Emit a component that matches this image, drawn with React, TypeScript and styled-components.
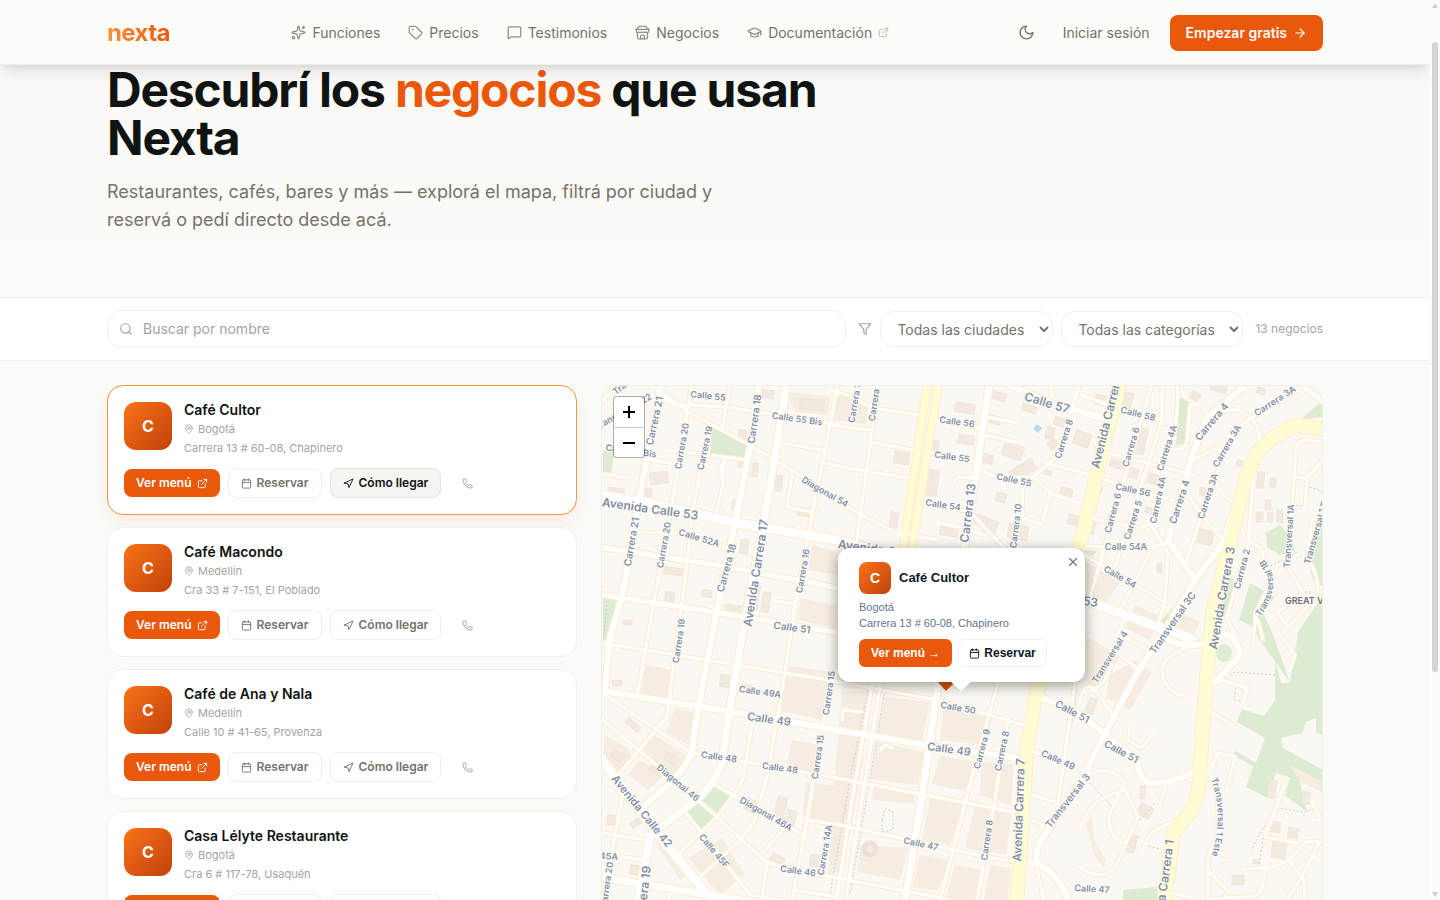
import React from "react";
import styled, { createGlobalStyle, css } from "styled-components";
import {
  ArrowRight,
  Calendar,
  ExternalLink,
  GraduationCap,
  MapPin,
  MessageSquare,
  Navigation,
  Phone,
  Search,
  Sparkles,
  Tag,
  X,
} from "lucide-react";

const color = {
  ink: "#0f1412",
  muted: "#78716c",
  faint: "#a8a29e",
  line: "#f0efeb",
  page: "#fafaf7",
  brand: "#ea580c",
  brandDark: "#c2410c",
  slate: "#64748b",
};

const GlobalStyle = createGlobalStyle`
  *, *::before, *::after { box-sizing: border-box; }
  body {
    margin: 0;
    background: ${color.page};
    color: ${color.ink};
    font-family: Inter, "Liberation Sans", sans-serif;
    font-size: 14px;
    line-height: 20px;
  }
  h1, h2, p { margin: 0; }
  a { color: inherit; text-decoration: none; }
  button, input, select { font: inherit; color: inherit; }
`;

const Shell = styled.div`
  display: grid;
  grid-template-columns: minmax(0, 1fr) 10px;
  height: 100vh;
  overflow: hidden;
`;

const Page = styled.div`
  height: 100vh;
  overflow: hidden;
`;

const Container = styled.div`
  width: 100%;
  max-width: 1280px;
  margin: 0 auto;
  padding: 0 32px;
`;

/* Header */

const Header = styled.header`
  position: relative;
  z-index: 5;
  background: #fbfbf8;
  box-shadow: inset 0 -1px ${color.line}, 0 10px 15px -3px rgba(0, 0, 0, 0.1), 0 4px 6px -4px rgba(0, 0, 0, 0.1);
`;

const HeaderBar = styled(Container)`
  display: flex;
  align-items: center;
  justify-content: space-between;
  height: 65px;
`;

const Logo = styled.a`
  font-size: 24px;
  line-height: 32px;
  font-weight: 700;
  letter-spacing: -0.025em;
  background: linear-gradient(90deg, #fb923c, ${color.brand});
  -webkit-background-clip: text;
  background-clip: text;
  color: transparent;
`;

const Nav = styled.nav`
  display: flex;
  gap: 28px;
`;

const NavLink = styled.a`
  display: flex;
  align-items: center;
  gap: 6px;
  line-height: 21px;
  color: ${color.muted};
  svg { opacity: 0.8; }
  svg + span + svg { opacity: 0.5; }
`;

const HeaderActions = styled.div`
  display: flex;
  align-items: center;
  gap: 20px;
  line-height: 21px;
  color: ${color.muted};
`;

const IconButton = styled.button`
  display: grid;
  place-items: center;
  width: 32px;
  height: 32px;
  padding: 0;
  border: 0;
  border-radius: 8px;
  background: none;
`;

const SignUp = styled.a`
  display: flex;
  align-items: center;
  gap: 6px;
  height: 36px;
  padding: 0 16px;
  border-radius: 8px;
  background: ${color.brand};
  color: #fff;
  font-weight: 600;
`;

/* Hero */

const Hero = styled.section`
  padding: 1px 0 63px;
  background: linear-gradient(180deg, #faf9f5, ${color.page});
`;

const HeroTitle = styled.h1`
  max-width: 768px;
  font-size: 48px;
  line-height: 48px;
  font-weight: 700;
  letter-spacing: -0.025em;
  em { font-style: normal; color: ${color.brand}; }
`;

const HeroText = styled.p`
  max-width: 640px;
  margin-top: 16px;
  font-size: 18px;
  line-height: 28px;
  color: ${color.muted};
`;

/* Filters */

const FilterBar = styled.section`
  background: #fff;
  border: solid ${color.line};
  border-width: 1px 0;
`;

const FilterForm = styled.form`
  display: flex;
  align-items: center;
  gap: 8px;
  padding: 12px 0;
`;

const SearchField = styled.label`
  display: flex;
  flex: 1;
  align-items: center;
  gap: 10px;
  height: 38px;
  margin-right: 4px;
  padding: 0 11px;
  border: 1px solid ${color.line};
  border-radius: 14px;
  color: ${color.faint};
  input {
    flex: 1;
    min-width: 0;
    padding: 0;
    border: 0;
    outline: 0;
    background: none;
    color: ${color.ink};
  }
  input::placeholder { color: ${color.faint}; opacity: 1; }
`;

const FilterIcon = styled.span`
  display: flex;
  color: ${color.faint};
`;

const Select = styled.select<{ $width: number }>`
  width: ${(p) => p.$width}px;
  height: 36px;
  padding: 0 0 0 12px;
  border: 1px solid ${color.line};
  border-radius: 14px;
  background: #fff;
  color: ${color.muted};
`;

const Count = styled.span`
  margin-left: 4px;
  font-size: 12px;
  color: ${color.faint};
`;

/* Results */

const Results = styled(Container)`
  display: grid;
  grid-template-columns: 470fr 722fr;
  align-items: start;
  gap: 24px;
  padding-top: 24px;
`;

const List = styled.div`
  display: flex;
  flex-direction: column;
  gap: 12px;
`;

const Card = styled.article<{ $active?: boolean }>`
  display: flex;
  flex-direction: column;
  gap: 12px;
  padding: 16px;
  border: 1px solid ${(p) => (p.$active ? "#fb923c" : color.line)};
  border-radius: 16px;
  background: #fff;
  ${(p) =>
    p.$active &&
    css`
      box-shadow: 0 8px 16px -4px rgba(234, 88, 12, 0.12);
    `}
`;

const CardTop = styled.div`
  display: flex;
  gap: 12px;
`;

const Avatar = styled.div<{ $small?: boolean }>`
  display: grid;
  place-items: center;
  flex: none;
  width: ${(p) => (p.$small ? 32 : 48)}px;
  height: ${(p) => (p.$small ? 32 : 48)}px;
  border-radius: ${(p) => (p.$small ? 8 : 12)}px;
  background: linear-gradient(135deg, #f97316, ${color.brandDark});
  color: #fff;
  font-size: ${(p) => (p.$small ? 14 : 16)}px;
  font-weight: 700;
`;

const CardInfo = styled.div`
  display: flex;
  flex-direction: column;
  gap: 3px;
  font-size: 11px;
  line-height: 16px;
  color: ${color.faint};
`;

const CardName = styled.h2`
  font-size: 14px;
  line-height: 16px;
  font-weight: 600;
  color: ${color.ink};
`;

const City = styled.p`
  display: flex;
  align-items: center;
  gap: 4px;
`;

const Actions = styled.div`
  display: flex;
  align-items: center;
  gap: 8px;
`;

const Action = styled.a<{ $kind?: "primary" | "active" | "icon" }>`
  display: flex;
  align-items: center;
  gap: 5px;
  height: 30px;
  padding: 0 12px;
  border: 1px solid ${color.line};
  border-radius: 8px;
  color: ${color.muted};
  font-size: 12px;
  font-weight: 600;
  white-space: nowrap;
  ${(p) =>
    p.$kind === "primary" &&
    css`
      height: 28px;
      border: 0;
      background: ${color.brand};
      color: #fff;
    `}
  ${(p) =>
    p.$kind === "active" &&
    css`
      border-color: #e7e5e0;
      background: #f4f4f0;
      color: ${color.ink};
    `}
  ${(p) =>
    p.$kind === "icon" &&
    css`
      border-color: transparent;
      color: ${color.faint};
    `}
`;

/* Map */

const MapPanel = styled.section`
  position: relative;
  height: 640px;
  overflow: hidden;
  border: 1px solid ${color.line};
  border-radius: 16px;
  background: #fbf7f2;
`;

const MapCanvas = styled.svg`
  display: block;
  width: 100%;
  height: 100%;
  font-family: Inter, "Liberation Sans", sans-serif;
`;

const ZoomControl = styled.div`
  position: absolute;
  top: 10px;
  left: 11px;
  display: flex;
  flex-direction: column;
  border: 1px solid rgba(0, 0, 0, 0.3);
  border-radius: 4px;
  background: #fff;
  background-clip: padding-box;
`;

const ZoomButton = styled.button`
  display: grid;
  place-items: center;
  width: 30px;
  height: 30px;
  padding: 0;
  border: 0;
  background: none;
  color: #000;
  & + & { border-top: 1px solid #ccc; }
`;

const Popup = styled.div`
  position: absolute;
  top: 162px;
  left: 236px;
  width: 247px;
  padding: 14px 21px 15px;
  border-radius: 12px;
  background: #fff;
  box-shadow: 0 3px 14px rgba(0, 0, 0, 0.4);
  color: ${color.slate};
  font-family: "Liberation Sans", Arial, sans-serif;
  font-size: 11px;
  line-height: 16px;
`;

const PopupHead = styled.div`
  display: flex;
  align-items: center;
  gap: 8px;
  margin-bottom: 5px;
  color: #0f172a;
  font-size: 13px;
  font-weight: 700;
`;

const PopupActions = styled.div`
  display: flex;
  gap: 6px;
  margin-top: 8px;
`;

const PopupAction = styled.a<{ $primary?: boolean }>`
  display: flex;
  align-items: center;
  gap: 4px;
  height: 28px;
  padding: 0 ${(p) => (p.$primary ? 12 : 10)}px;
  border: ${(p) => (p.$primary ? "0" : "1px solid #eef0f6")};
  border-radius: 6px;
  background: ${(p) => (p.$primary ? color.brand : "#fff")};
  color: ${(p) => (p.$primary ? "#fff" : "#0f172a")};
  font-size: 12px;
  font-weight: 700;
  white-space: nowrap;
`;

const PopupClose = styled.button`
  position: absolute;
  top: 4px;
  right: 2px;
  display: grid;
  place-items: center;
  width: 20px;
  height: 20px;
  padding: 0;
  border: 0;
  background: none;
  color: #757575;
`;

const PopupTail = styled.svg`
  position: absolute;
  top: 100%;
  left: 97px;
`;

/* Scroll rail */

const Rail = styled.div`
  display: flex;
  flex-direction: column;
  align-items: center;
  padding: 3px 0;
  background: #fcfcfb;
`;

const Thumb = styled.div`
  flex: none;
  width: 6px;
  height: 70vh;
  margin: 34px 0 auto;
  border-radius: 3px;
  background: #d4d4d2;
`;

const StoreIcon = () => (
  <svg width="15" height="15" viewBox="0 0 24 24" fill="none" stroke="currentColor" strokeWidth="2" strokeLinecap="round" strokeLinejoin="round" aria-hidden="true">
    <path d="m2 7 4.41-4.41A2 2 0 0 1 7.83 2h8.34a2 2 0 0 1 1.42.59L22 7" />
    <path d="M4 12v8a2 2 0 0 0 2 2h12a2 2 0 0 0 2-2v-8" />
    <path d="M15 22v-4a2 2 0 0 0-2-2h-2a2 2 0 0 0-2 2v4M2 7h20" />
    <path d="M22 7v3a2 2 0 0 1-2 2a2.7 2.7 0 0 1-1.59-.63.7.7 0 0 0-.82 0A2.7 2.7 0 0 1 16 12a2.7 2.7 0 0 1-1.59-.63.7.7 0 0 0-.82 0A2.7 2.7 0 0 1 12 12a2.7 2.7 0 0 1-1.59-.63.7.7 0 0 0-.82 0A2.7 2.7 0 0 1 8 12a2.7 2.7 0 0 1-1.59-.63.7.7 0 0 0-.82 0A2.7 2.7 0 0 1 4 12a2 2 0 0 1-2-2V7" />
  </svg>
);

const MoonIcon = () => (
  <svg width="17" height="17" viewBox="0 0 24 24" fill="none" stroke="currentColor" strokeWidth="2" strokeLinecap="round" strokeLinejoin="round" aria-hidden="true">
    <path d="M12 3a6 6 0 0 0 9 9 9 9 0 1 1-9-9Z" />
  </svg>
);

const FunnelIcon = () => (
  <svg width="14" height="14" viewBox="0 0 24 24" fill="none" stroke="currentColor" strokeWidth="2" strokeLinecap="round" strokeLinejoin="round" aria-hidden="true">
    <polygon points="22 3 2 3 10 12.46 10 19 14 21 14 12.46 22 3" />
  </svg>
);

/* Street data, in map units */

const avenues: [number, string][] = [
  [9, "M598 495L640 501L737 523L837 540L960 572L1085 600L1147 623L1190 638"],
  [6, "M662 380L639 500L622 597L610 637L605 690"],
  [6, "M759 380L750 447L735 523L715 620L698 710L692 752Q686 768 670 783L643 807"],
  [7, "M787 380L770 487L742 637L730 707L722 763Q716 780 700 797L657 830"],
  [5, "M598 547L717 565L838 588L960 610"],
  [5, "M598 594L713 612L840 633"],
  [6, "M598 690L670 702L733 712L837 730L949 749L1017 758"],
  [9, "M600 757L657 833L712 900L740 930"],
  [8, "M650 837L638 900L630 940"],
  [7, "M598 877L710 895L790 908"],
  [7, "M990 380L977 467L965 543L937 690L923 790L905 900L900 940"],
  [6, "M1005 383L1048 402L1102 418"],
  [6, "M1242 388L1207 418L1193 453L1168 540L1195 580L1223 543L1237 503"],
  [6, "M1195 580L1160 638L1137 673L1103 737L1080 783L1043 837Q1034 850 1037 863Q1062 876 1070 905"],
  [6, "M1043 698L1080 715L1102 732L1137 760Q1140 782 1150 783Q1170 784 1192 773L1205 773"],
  [5, "M1298 382L1326 404"],
  [6, "M1165 638Q1186 650 1208 642L1228 634Q1244 650 1238 658L1215 682"],
];

const yellow: [number, string][] = [
  [7, "M928 380L903 547L895 600"],
  [7, "M939 380L912 547L905 600"],
  [13, "M1121 380L1103 447L1082 537L1050 640L1035 700L1027 747L1017 900L1014 960"],
  [13, "M1328 430L1297 425Q1264 440 1256 455Q1246 475 1243 490L1213 613L1208 660L1200 767Q1200 800 1188 815L1173 833L1165 900L1160 960"],
];

const streets = [
  "M602 400L612 392L625 384M602 398L610 406",
  "M645 382L690 413L750 445L803 477L838 502L900 535",
  "M662 398L672 404L727 407M727 407L840 425",
  "M780 443L823 450M823 463L840 466",
  "M730 384L722 430M838 384L797 593L787 660L768 773L755 820L740 840L697 880",
  "M692 384L671 510L653 607L638 692M705 447L693 510L687 563L667 717L620 773",
  "M668 450L747 460M645 458L668 463M603 474L628 478M633 532L677 533L727 547",
  "M792 477L787 507L812 512M725 458L720 470L724 480L716 515M725 458L722 480",
  "M775 601L795 604L793 612",
  "M830 390L850 396L873 408L920 415M830 425L870 430M870 442L913 450M830 465L908 478",
  "M878 384L868 460L857 540M900 532L936 540",
  "M935 420L980 428M930 452L975 462M920 502L970 512L1003 547",
  "M978 470L1000 478L1033 477L1055 458L1080 384M987 417L1017 423M985 435L1015 442",
  "M1047 463L1090 475M1033 477L1050 493L1085 505M1050 493L1042 525L1023 518L1022 487",
  "M940 523L962 528L985 535M955 480L957 477L972 478",
  "M1105 452L1193 475M1080 472L1172 500M1090 518L1140 528L1152 523L1162 500",
  "M1080 546L1147 548L1168 543M1082 395L1102 403L1162 420M1152 384L1090 597M1162 384L1162 420L1143 480L1115 567",
  "M1177 384Q1179 400 1173 450Q1187 450 1187 440L1190 405Q1200 400 1208 416Q1232 406 1243 412Q1258 420 1260 440",
  "M1298 390L1253 417L1230 433L1215 480Q1220 495 1237 505M1213 480L1187 560",
  "M1187 493L1200 513L1220 537M1193 460L1217 448L1225 455",
  "M1080 553L1165 602L1168 553L1150 523M1153 547L1120 610M1125 618L1115 640M1165 600L1158 625",
  "M1255 460L1248 543L1227 617L1237 640M1248 543Q1258 543 1262 552Q1268 572 1274 580M1253 643L1256 612Q1266 590 1274 580",
  "M1323 442Q1297 436 1296 448L1288 567L1303 593L1277 612L1288 627L1318 595Q1318 570 1307 560L1312 520L1323 515",
  "M1293 477L1307 478L1305 507M1307 478L1323 460",
  "M1207 772Q1220 785 1218 833L1208 857L1208 900M1218 853L1228 856M1208 870L1230 893M1208 899L1255 896Q1266 890 1264 870L1290 860L1305 842L1323 842",
  "M1323 836L1300 880L1288 898M1290 862L1304 880L1305 900M1311 855L1320 861M1244 869L1264 868",
  "M1215 678L1247 688L1243 703M1207 710L1233 725M1212 767L1217 753L1235 757L1227 790",
  "M1190 647Q1150 660 1167 685Q1175 696 1187 697M1130 728L1128 740L1141 748L1153 735",
  "M1117 653L1137 668M1130 640L1148 650M1085 692Q1103 690 1112 665M1080 700Q1084 680 1095 690L1112 713",
  "M1080 780Q1110 760 1125 783L1110 813Q1106 835 1123 843M1125 790L1138 817L1115 868Q1100 882 1080 867M1123 790Q1086 800 1080 830M1143 850Q1150 823 1180 823M1165 787L1160 805",
  "M1172 893L1190 897M1287 778L1265 837L1297 843M1311 800L1321 820L1314 820",
  "M1263 640L1258 620M1278 632L1295 655L1290 670",
  "M603 643L840 682L937 700L1030 727M605 695L690 752L837 778L1013 812",
  "M603 720L713 813L767 863L837 878L937 897L960 903M712 783L803 835",
  "M753 720L745 767Q744 782 735 793L717 817L680 853M685 812L750 895L780 900M623 793L607 880L600 920",
  "M603 833L645 840M623 857L642 860M767 863L762 900M840 660L823 723L807 820L792 900M783 830L762 853M670 895L667 905",
  "M807 820L840 825L987 857L1037 865M795 890L838 897",
  "M998 683L975 765L940 900M1008 720L990 830L977 900M1030 750L1090 773M1075 683L1058 803M1027 793L1058 803M1027 818L1043 825M1037 870L1045 905",
  "M1080 383L1075 395M1050 384L1052 395M842 720L843 710L862 712M880 750L886 745L892 748",
  "M880 686L862 800L845 905M872 686L852 800L836 905",
];

const footpaths = [
  "M1275 675L1235 672L1228 678M1236 688L1234 700L1244 702M1292 505L1304 506M1267 568L1297 552M1310 487L1323 492M1305 592L1313 592",
  "M1090 783L1113 808M1145 845L1160 849M1277 808L1305 812L1316 808M1265 825L1251 850M1263 838L1259 868M1140 820L1155 803",
  "M885 690L868 790L850 895M868 690L848 790L830 895M1166 425L1190 443M643 460L636 500M607 605L603 640",
  "M882 820L885 808L893 812L893 830L882 832Z",
];

const parks = [
  "712,427 747,443 744,457 710,453",
  "603,450 614,453 611,473 603,472",
  "603,593 619,600 612,640 603,640",
  "713,783 732,795 717,813 701,799",
  "697,802 714,817 702,833 685,813",
  "1180,397 1189,402 1185,443 1173,447",
  "1323,400 1323,417 1300,420",
  "1280,525 1293,540 1295,552 1280,555 1267,547 1266,533",
  "1323,517 1323,587 1313,580 1308,560 1310,537",
  "1250,583 1275,597 1263,612 1260,640 1250,625 1239,620",
  "1230,577 1237,583 1228,612 1215,620",
  "1168,613 1173,622 1170,628 1160,622",
  "1082,550 1098,551 1092,556",
  "1123,890 1157,887 1158,900 1123,902",
  "1262,610 1275,640 1284,665 1290,683 1281,683 1275,660 1275,700 1264,716 1242,709 1237,722 1265,738 1256,763 1236,751 1233,755 1253,766 1246,787 1268,798 1276,773 1290,778 1285,795 1307,812 1300,782 1290,765 1323,782 1323,770 1283,748 1281,738 1302,733 1306,722 1316,718 1316,733 1323,735 1323,595 1298,632 1290,683 1260,640",
];

const blocks = [
  "842,692 872,690 858,790 843,870 828,875 836,760",
  "884,697 930,702 922,742 876,736",
  "876,742 925,752 918,785 870,779",
  "944,704 992,718 985,745 940,740",
  "940,755 975,762 970,792 932,784",
  "930,798 965,803 950,845 922,840",
  "975,806 1012,814 1006,855 965,848",
  "982,762 1014,764 1011,805 980,795",
  "875,785 915,792 913,804 871,800",
  "860,845 908,848 900,880 858,872",
  "920,855 950,860 938,890 912,888",
  "955,865 985,870 975,900 945,900",
  "990,865 1010,868 1008,900 984,900",
  "784,665 832,672 824,720 775,710",
  "792,740 820,745 812,775 786,770",
  "806,782 836,786 832,822 802,816",
  "646,665 675,670 668,700 640,692",
  "675,708 694,712 688,745 666,732",
  "605,735 628,748 634,760 618,775 603,760",
  "655,735 690,758 672,778 640,755",
  "640,760 664,775 648,790 628,775",
  "688,858 722,838 745,875 720,895",
  "655,842 672,850 692,868 680,880",
  "812,545 838,552 838,575 808,570",
  "800,598 838,606 836,628 798,620",
  "785,392 830,396 828,415 795,412",
  "834,388 868,402 866,424 832,420",
  "1084,560 1120,582 1105,605 1084,600",
  "1135,605 1160,616 1150,640 1125,628",
  "1086,636 1120,656 1098,690 1084,680",
  "1110,675 1135,660 1152,672 1130,710 1106,698",
  "1170,608 1200,622 1188,645 1162,636",
  "1094,840 1106,860 1104,868 1095,857 1086,825 1092,815",
  "1284,762 1323,780 1323,793 1282,772",
];

/* x, y, width, height, rotation */
const buildings: [number, number, number, number, number][] = [
  [650, 472, 18, 12, -8], [640, 488, 12, 8, 8], [608, 488, 16, 8, 5], [738, 430, 8, 10, 10],
  [752, 463, 6, 14, 8], [744, 468, 5, 8, 8], [738, 460, 5, 7, 8], [732, 500, 6, 10, 8],
  [774, 475, 8, 16, 8], [800, 400, 24, 10, 6], [760, 390, 14, 8, 6], [798, 508, 12, 8, 8],
  [664, 568, 24, 7, 8], [665, 592, 9, 10, 8], [702, 590, 10, 7, 8], [745, 585, 14, 24, 8],
  [762, 592, 8, 20, 8], [725, 605, 16, 10, 8], [740, 540, 8, 14, 8], [625, 548, 8, 6, 8],
  [623, 620, 9, 5, 0], [720, 675, 10, 12, 8], [742, 685, 10, 7, 8], [612, 680, 10, 6, 0],
  [955, 403, 20, 10, 8], [958, 435, 16, 9, 8], [894, 452, 15, 12, 8], [928, 470, 10, 26, 8],
  [930, 440, 8, 16, 8], [985, 415, 16, 8, 20], [990, 392, 16, 8, 18], [1003, 444, 20, 14, 20],
  [1010, 464, 26, 12, -32], [1022, 405, 15, 7, 18], [1046, 427, 8, 12, 15], [1048, 440, 10, 8, -30],
  [1074, 432, 16, 14, 20], [1054, 418, 12, 8, 20], [996, 493, 10, 9, 15], [980, 454, 13, 9, 15],
  [940, 525, 18, 11, 8], [972, 515, 14, 10, 15], [985, 520, 12, 14, 20], [1008, 525, 20, 14, 12],
  [1060, 488, 12, 10, 15], [1068, 515, 10, 10, 15], [890, 512, 8, 16, 8], [1044, 470, 8, 5, 15],
  [1095, 395, 10, 10, 15], [1120, 392, 12, 16, 15], [1105, 430, 8, 14, 15], [1135, 428, 11, 26, 12],
  [1128, 468, 10, 10, 15], [1148, 474, 10, 10, 15], [1110, 460, 14, 8, 15], [1092, 485, 10, 8, 15],
  [1086, 520, 9, 14, 15], [1145, 508, 12, 6, 15], [1190, 392, 10, 8, 35], [1211, 384, 16, 8, 15],
  [1257, 388, 8, 6, 20], [1257, 472, 7, 16, 5], [1270, 478, 6, 9, 5], [1265, 500, 6, 10, 0],
  [1256, 512, 7, 10, 0], [1267, 512, 6, 10, 0], [1277, 510, 6, 13, 0], [1197, 530, 16, 14, 15],
  [1200, 488, 8, 8, 10], [1237, 460, 5, 6, 20], [1157, 563, 5, 10, 0], [1140, 786, 5, 13, 5],
  [1138, 805, 14, 12, 30], [1128, 835, 8, 18, 15], [1232, 875, 12, 10, 0], [1268, 780, 8, 18, 10],
  [1302, 792, 8, 12, 8], [1270, 822, 10, 10, 5], [1288, 828, 10, 10, 10], [1272, 842, 14, 16, 10],
  [1253, 859, 6, 5, 0], [1087, 698, 8, 16, 20], [1024, 735, 10, 14, 10], [1070, 690, 5, 32, 8],
  [650, 765, 10, 8, 35], [665, 755, 12, 8, 35], [612, 752, 12, 8, 35], [625, 722, 16, 6, 40],
  [630, 820, 12, 6, -35], [607, 815, 8, 10, 8], [630, 865, 10, 10, 8], [745, 800, 12, 12, 30],
  [775, 797, 10, 24, 15], [785, 810, 10, 20, 15], [770, 855, 14, 8, 30], [810, 855, 14, 12, 8],
];

type Label = [string, number, number, number, number, ("start" | "end")?];

const labels: Label[] = [
  ["Calle 55", 708, 396, 6, 9], ["Carrera 18", 755, 419, -82, 10], ["Calle 55 Bis", 797, 419, 8, 9],
  ["Carrera 21", 655, 421, -78, 10], ["Carrera 20", 682, 446, -80, 9], ["Carrera 19", 705, 448, -78, 9],
  ["Calle 54 Bis", 631, 451, 8, 9], ["Transversal 22", 623, 412, -30, 9], ["Transversal", 614, 393, -38, 9, "start"],
  ["Diagonal 54", 825, 492, 30, 9], ["Avenida Calle 53", 650, 509, 8, 12], ["Carrera 21", 632, 542, -80, 10],
  ["Carrera 20", 664, 545, -80, 9], ["Calle 52A", 699, 538, 17, 9], ["Carrera 18", 727, 568, -75, 10],
  ["Avenida Carrera 17", 756, 573, -81, 12], ["Carrera 16", 803, 571, -80, 9], ["Calle 51", 792, 628, 8, 10],
  ["Carrera 19", 679, 641, -82, 9], ["Carrera 17", 855, 401, -80, 9], ["Carrera 16", 875, 399, -82, 9],
  ["Calle 56", 957, 422, 8, 9], ["Calle 55", 952, 457, 8, 9], ["Calle 55", 1014, 480, 12, 9],
  ["Calle 54", 943, 505, 9, 9], ["Carrera 13", 968, 513, -83, 12], ["Carrera 10", 1016, 526, -83, 9],
  ["Carrera 8", 1064, 439, -72, 9], ["Calle 57", 1047, 403, 17, 12], ["Avenida Calle 53", 838, 544, 8, 12, "start"],
  ["Calle 53", 1098, 603, 8, 12, "end"], ["Avenida Carrera 7", 1095, 468, -76, 12, "start"],
  ["Calle 58", 1138, 414, 14, 9], ["Carrera 6", 1131, 447, -74, 9], ["Carrera 4A", 1167, 448, -72, 9],
  ["Carrera 4", 1212, 422, -50, 10], ["Carrera 3A", 1275, 401, -33, 9], ["Carrera 3A", 1227, 446, -60, 9],
  ["Carrera 4", 1180, 502, -72, 10], ["Carrera 3A", 1208, 496, -72, 9], ["Carrera 4A", 1158, 500, -78, 9],
  ["Carrera 6", 1113, 513, -75, 9], ["Carrera 5", 1133, 520, -72, 9], ["Calle 56", 1133, 490, 12, 9],
  ["Calle 54A", 1126, 547, 0, 9], ["Calle 54", 1120, 577, 30, 9], ["Avenida Carrera 3", 1222, 598, -80, 12],
  ["Carrera 2", 1242, 569, -75, 9], ["Transversal 1A", 1289, 536, -86, 9], ["Transversal 1 Este", 1307, 564, -74, 9, "start"],
  ["Transversal 3C", 1173, 623, -55, 10], ["Transversal 4", 1110, 657, -58, 9], ["Transversal 3", 1068, 801, -52, 10],
  ["Calle 51", 1121, 752, 28, 10], ["Calle 51", 1072, 712, 28, 10], ["Avenida Carrera 1", 1170, 840, -82, 12, "end"],
  ["Calle 47", 1092, 889, 3, 9], ["Calle 50", 958, 708, 10, 9], ["Calle 49", 949, 749, 8, 11],
  ["Carrera 9", 982, 749, -75, 9], ["Carrera 8", 1002, 751, -78, 9], ["Avenida Carrera 7", 1019, 810, -88, 12],
  ["Calle 49", 1058, 760, 24, 9], ["Calle 47", 921, 844, 12, 9], ["Carrera 8", 987, 840, -82, 9],
  ["Carrera 15", 829, 693, -82, 9], ["Carrera 15", 818, 757, -82, 9], ["Carrera 14A", 825, 850, -80, 9],
  ["Calle 49A", 760, 692, 8, 9], ["Calle 49", 769, 719, 8, 11], ["Calle 48", 719, 757, 8, 9],
  ["Calle 48", 780, 768, 8, 9], ["Diagonal 46", 678, 783, 40, 9], ["Diagonal 46A", 766, 814, 30, 9],
  ["Avenida Calle 42", 642, 811, 51, 11], ["Calle 45F", 714, 851, 50, 9], ["Calle 46", 798, 871, 8, 9],
  ["Calle 45A", 618, 857, 4, 9, "end"], ["Carrera 20", 607, 885, -82, 9], ["Carrera 19", 647, 866, -83, 12, "end"],
];

const CityMap = () => (
  <MapCanvas viewBox="602 386 720 638" preserveAspectRatio="xMinYMin slice" role="img" aria-label="Mapa de Chapinero, Bogotá">
    <g fill="#f5ede2">
      {blocks.map((p) => <polygon key={p} points={p} />)}
    </g>
    <g fill="#deebd3">
      {parks.map((p) => <polygon key={p} points={p} />)}
    </g>
    <g fill="#f2eadf" stroke="#e9dfd0" strokeWidth="0.5">
      {buildings.map(([x, y, w, h, r]) => (
        <rect key={`${x}-${y}`} x={x} y={y} width={w} height={h} transform={`rotate(${r} ${x + w / 2} ${y + h / 2})`} />
      ))}
    </g>
    <polygon points="1037,424 1042,428 1038,433 1033,429" fill="#b5dde2" />
    <circle cx="870" cy="849" r="6" fill="none" stroke="#ebe2d5" strokeWidth="5" />
    <g fill="none" stroke="#ccced4" strokeWidth="1" strokeDasharray="2 2">
      {footpaths.map((d) => <path key={d} d={d} />)}
    </g>
    <g fill="none" stroke="#fdeccd" strokeLinejoin="round">
      {streets.map((d) => <path key={d} d={d} strokeWidth="5" />)}
      {avenues.map(([w, d]) => <path key={d} d={d} strokeWidth={w + 2} />)}
      {yellow.map(([w, d]) => <path key={d} d={d} strokeWidth={w + 2} />)}
    </g>
    <g fill="none" stroke="#fff" strokeLinejoin="round" strokeLinecap="round">
      {streets.map((d) => <path key={d} d={d} strokeWidth="3" />)}
      {avenues.map(([w, d]) => <path key={d} d={d} strokeWidth={w} />)}
    </g>
    <g fill="none" stroke="#fffbd3" strokeLinejoin="round">
      {yellow.map(([w, d]) => <path key={d} d={d} strokeWidth={w} />)}
    </g>
    <ellipse cx="1224" cy="653" rx="8" ry="9" fill="#deebd3" />
    <g fill="#8490a3" stroke="#fff" strokeOpacity="0.7" strokeWidth="2" paintOrder="stroke" fontWeight="600" textAnchor="middle">
      {labels.map(([text, x, y, angle, size, anchor]) => (
        <text key={`${x}-${y}`} transform={`translate(${x} ${y}) rotate(${angle})`} dy={Math.round(size / 3)} fontSize={size} textAnchor={anchor}>
          {text}
        </text>
      ))}
      <path id="tr1b" d="M1260 617Q1286 582 1261 556" fill="none" stroke="none" />
      <path id="tr1e" d="M1211 779Q1225 815 1210 862" fill="none" stroke="none" />
      <text fontSize="9" textAnchor="start"><textPath href="#tr1b">Transversal 1B</textPath></text>
      <text fontSize="9" textAnchor="start"><textPath href="#tr1e">Transversal 1 Este</textPath></text>
      <text x="1285" y="604" fontSize="9" textAnchor="start" fill="#6b6b6b">GREAT VIEW</text>
    </g>
    <path d="M936 680H957L946 691Z" fill="#d9500b" />
  </MapCanvas>
);

const businesses = [
  { name: "Café Cultor", city: "Bogotá", address: "Carrera 13 # 60-08, Chapinero" },
  { name: "Café Macondo", city: "Medellín", address: "Cra 33 # 7-151, El Poblado" },
  { name: "Café de Ana y Nala", city: "Medellín", address: "Calle 10 # 41-65, Provenza" },
  { name: "Casa Lélyte Restaurante", city: "Bogotá", address: "Cra 6 # 117-78, Usaquén" },
];

const BusinessCard = ({ name, city, address, active }: { name: string; city: string; address: string; active: boolean }) => (
  <Card $active={active}>
    <CardTop>
      <Avatar>C</Avatar>
      <CardInfo>
        <CardName>{name}</CardName>
        <City><MapPin size={10} />{city}</City>
        <p>{address}</p>
      </CardInfo>
    </CardTop>
    <Actions>
      <Action href="#menu" $kind="primary">Ver menú<ExternalLink size={11} /></Action>
      <Action href="#reservar"><Calendar size={11} />Reservar</Action>
      <Action href="#llegar" $kind={active ? "active" : undefined}><Navigation size={11} />Cómo llegar</Action>
      <Action href="#telefono" $kind="icon" aria-label="Llamar"><Phone size={11} /></Action>
    </Actions>
  </Card>
);

export default function App() {
  return (
    <Shell>
      <GlobalStyle />
      <Page>
        <Header>
          <HeaderBar>
            <Logo href="#inicio">nexta</Logo>
            <Nav aria-label="Principal">
              <NavLink href="#funciones"><Sparkles size={15} /><span>Funciones</span></NavLink>
              <NavLink href="#precios"><Tag size={15} /><span>Precios</span></NavLink>
              <NavLink href="#testimonios"><MessageSquare size={15} /><span>Testimonios</span></NavLink>
              <NavLink href="#negocios"><StoreIcon /><span>Negocios</span></NavLink>
              <NavLink href="#docs"><GraduationCap size={15} /><span>Documentación</span><ExternalLink size={11} /></NavLink>
            </Nav>
            <HeaderActions>
              <IconButton type="button" aria-label="Cambiar tema"><MoonIcon /></IconButton>
              <a href="#login">Iniciar sesión</a>
              <SignUp href="#registro">Empezar gratis<ArrowRight size={14} /></SignUp>
            </HeaderActions>
          </HeaderBar>
        </Header>

        <main>
          <Hero>
            <Container>
              <HeroTitle>Descubrí los <em>negocios</em> que usan Nexta</HeroTitle>
              <HeroText>Restaurantes, cafés, bares y más — explorá el mapa, filtrá por ciudad y reservá o pedí directo desde acá.</HeroText>
            </Container>
          </Hero>

          <FilterBar>
            <Container>
              <FilterForm>
                <SearchField>
                  <Search size={14} />
                  <input type="text" placeholder="Buscar por nombre" aria-label="Buscar por nombre" />
                </SearchField>
                <FilterIcon><FunnelIcon /></FilterIcon>
                <Select $width={173} aria-label="Ciudad">
                  <option>Todas las ciudades</option>
                </Select>
                <Select $width={182} aria-label="Categoría">
                  <option>Todas las categorías</option>
                </Select>
                <Count>13 negocios</Count>
              </FilterForm>
            </Container>
          </FilterBar>

          <Results>
            <List>
              {businesses.map((b, i) => <BusinessCard key={b.name} {...b} active={i === 0} />)}
            </List>
            <MapPanel>
              <CityMap />
              <ZoomControl>
                <ZoomButton type="button" aria-label="Acercar">
                  <svg width="14" height="14" viewBox="0 0 14 14" stroke="currentColor" strokeWidth="2"><path d="M1 7H13M7 1V13" /></svg>
                </ZoomButton>
                <ZoomButton type="button" aria-label="Alejar">
                  <svg width="14" height="14" viewBox="0 0 14 14" stroke="currentColor" strokeWidth="2"><path d="M1 7H13" /></svg>
                </ZoomButton>
              </ZoomControl>
              <Popup role="dialog" aria-label="Café Cultor">
                <PopupHead><Avatar $small>C</Avatar>Café Cultor</PopupHead>
                <p>Bogotá</p>
                <p>Carrera 13 # 60-08, Chapinero</p>
                <PopupActions>
                  <PopupAction href="#menu" $primary>Ver menú →</PopupAction>
                  <PopupAction href="#reservar"><Calendar size={11} />Reservar</PopupAction>
                </PopupActions>
                <PopupClose type="button" aria-label="Cerrar"><X size={14} /></PopupClose>
                <PopupTail width="52" height="9" viewBox="0 0 52 9" aria-hidden="true">
                  <path d="M16 0H36L26 9Z" fill="#fff" />
                </PopupTail>
              </Popup>
            </MapPanel>
          </Results>
        </main>
      </Page>
      <Rail aria-hidden="true">
        <svg width="8" height="5" viewBox="0 0 8 5"><path d="M4 0L7 5H1Z" fill="#cfcfcd" /></svg>
        <Thumb />
        <svg width="8" height="5" viewBox="0 0 8 5"><path d="M4 5L7 0H1Z" fill="#cfcfcd" /></svg>
      </Rail>
    </Shell>
  );
}
